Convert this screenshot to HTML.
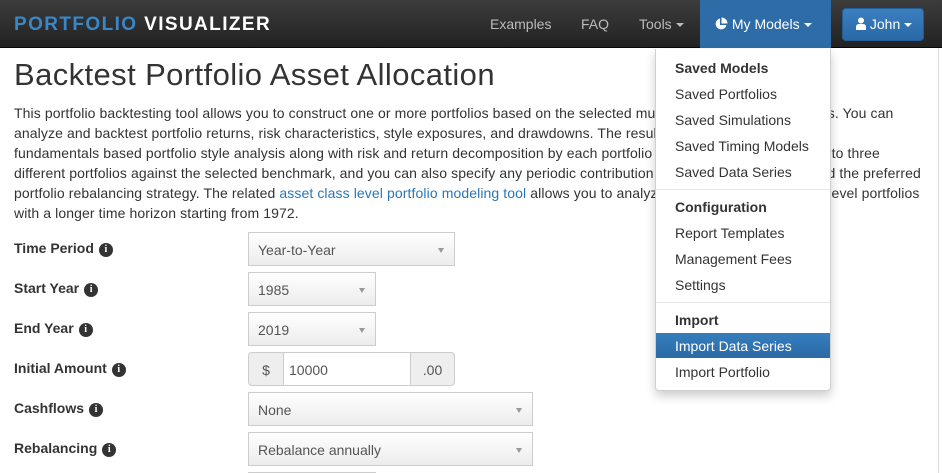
<!DOCTYPE html>
<html><head><meta charset="utf-8"><style>
*{box-sizing:border-box;margin:0;padding:0}
html,body{width:942px;height:473px;overflow:hidden}
body{background:#fff;font-family:"Liberation Sans",Arial,sans-serif;color:#333;position:relative}
.nav{position:absolute;left:0;top:0;width:942px;height:48px;background:linear-gradient(#3c3c3c,#222);border-bottom:1px solid #080808}
.logo{position:absolute;left:14px;top:14px;font-size:19px;font-weight:bold;letter-spacing:1.4px;color:#fff}
.logo span{color:#3a87c8}
.nl{position:absolute;top:16px;font-size:14px;color:#bbb}
.act{position:absolute;left:700px;top:0;width:131px;height:48px;background:#2d6ca7}
.john{position:absolute;left:842px;top:8px;width:82px;height:33px;background:linear-gradient(#3b7fc0,#2a68a6);border:1px solid #245e96;border-radius:4px}
.car{display:inline-block;width:0;height:0;border-left:4px solid transparent;border-right:4px solid transparent;border-top:4px solid currentColor;vertical-align:middle;margin-left:4px}
h1{position:absolute;left:14px;top:57px;font-size:31px;font-weight:normal;color:#333;letter-spacing:0.4px;white-space:nowrap}
p{position:absolute;left:14px;top:103px;width:930px;font-size:14px;line-height:20px;color:#333;letter-spacing:0.1px;white-space:nowrap}
a{color:#2a75b8;text-decoration:none}
.lbl{position:absolute;left:14px;font-size:14px;font-weight:bold;color:#333}
.i{display:inline-block;width:14px;height:14px;border-radius:50%;background:#333;color:#fff;font-size:10px;font-family:"Liberation Serif",serif;text-align:center;line-height:14px;margin-left:5px;vertical-align:1px;font-weight:bold}
.sel{position:absolute;left:248px;height:34px;border:1px solid #ccc;background:linear-gradient(#fff,#ececec);font-size:14px;color:#555;padding:9px 9px}
.sel:after{content:"";position:absolute;right:10px;top:15px;border-left:3.5px solid transparent;border-right:3.5px solid transparent;border-top:5px solid #999}
.add{position:absolute;top:352px;height:34px;background:#eee;border:1px solid #ccc;font-size:14px;color:#555;padding:9px 0;text-align:center}
.menu{position:absolute;left:655px;top:49px;width:176px;height:342px;background:#fff;border:1px solid rgba(0,0,0,.18);border-top:none;border-radius:0 0 4px 4px;box-shadow:0 5px 10px rgba(0,0,0,.2);font-size:14px}
.menu div{position:absolute;left:19px;color:#333}
.menu .h{font-weight:bold}
.menu .d{left:0;width:174px;height:1px;background:#e5e5e5}
.menu .hl{left:0;width:174px;height:25px;background:linear-gradient(#357ebd,#2b6aa5);color:#fff;padding:5px 19px}
</style></head><body>
<div class="nav">
<div class="logo"><span>PORTFOLIO</span> VISUALIZER</div>
<div class="nl" style="left:490px">Examples</div>
<div class="nl" style="left:581px">FAQ</div>
<div class="nl" style="left:639px">Tools<span class="car"></span></div>
<div class="act"></div>
<div class="nl" style="left:714px;color:#fff"><svg width="14" height="14" viewBox="0 0 14 14" style="vertical-align:-2px"><path d="M6 1.5A5.5 5.5 0 1 0 12.5 8H6Z" fill="#fff"/><path d="M7.5 0.5V6.5H13.5A6 6 0 0 0 7.5 0.5Z" fill="#fff"/></svg> My Models<span class="car"></span></div>
<div class="john"></div>
<div class="nl" style="left:856px;color:#fff"><svg width="10" height="13" viewBox="0 0 10 13" style="vertical-align:-1px"><circle cx="5" cy="3.5" r="3" fill="#fff"/><path d="M0 13V10Q0 7 3 7H7Q10 7 10 10V13Z" fill="#fff"/></svg> John<span class="car"></span></div>
</div>
<h1>Backtest Portfolio Asset Allocation</h1>
<p>This portfolio backtesting tool allows you to construct one or more portfolios based on the selected mutual funds, ETFs, and stocks. You can<br>analyze and backtest portfolio returns, risk characteristics, style exposures, and drawdowns. The results cover both returns and<br>fundamentals based portfolio style analysis along with risk and return decomposition by each portfolio asset. You can compare up to three<br>different portfolios against the selected benchmark, and you can also specify any periodic contribution or withdrawal cashflows and the preferred<br>portfolio rebalancing strategy. The related <a>asset class level portfolio modeling tool</a> allows you to analyze and backtest asset class level portfolios<br>with a longer time horizon starting from 1972.</p>
<div class="lbl" style="top:240px">Time Period<span class="i">i</span></div>
<div class="lbl" style="top:280px">Start Year<span class="i">i</span></div>
<div class="lbl" style="top:320px">End Year<span class="i">i</span></div>
<div class="lbl" style="top:360px">Initial Amount<span class="i">i</span></div>
<div class="lbl" style="top:400px">Cashflows<span class="i">i</span></div>
<div class="lbl" style="top:440px">Rebalancing<span class="i">i</span></div>
<div class="sel" style="top:232px;width:207px">Year-to-Year</div>
<div class="sel" style="top:272px;width:128px">1985</div>
<div class="sel" style="top:312px;width:128px">2019</div>
<div class="add" style="left:248px;width:36px;border-radius:4px 0 0 4px">$</div>
<div style="position:absolute;left:283px;top:352px;width:128px;height:34px;border:1px solid #ccc;font-size:14px;color:#555;padding:9px 5px">10000</div>
<div class="add" style="left:410px;width:45px;border-radius:0 4px 4px 0">.00</div>
<div class="sel" style="top:392px;width:285px">None</div>
<div class="sel" style="top:432px;width:285px">Rebalance annually</div>
<div style="position:absolute;left:248px;top:472px;width:128px;height:1px;background:#ccc"></div>
<div style="position:absolute;left:938px;top:48px;width:1px;height:425px;background:#ddd"></div>
<div class="menu">
<div class="h" style="top:11px">Saved Models</div>
<div style="top:37px">Saved Portfolios</div>
<div style="top:63px">Saved Simulations</div>
<div style="top:89px">Saved Timing Models</div>
<div style="top:115px">Saved Data Series</div>
<div class="d" style="top:140px"></div>
<div class="h" style="top:150px">Configuration</div>
<div style="top:176px">Report Templates</div>
<div style="top:202px">Management Fees</div>
<div style="top:228px">Settings</div>
<div class="d" style="top:253px"></div>
<div class="h" style="top:263px">Import</div>
<div class="hl" style="top:284px">Import Data Series</div>
<div style="top:315px">Import Portfolio</div>
</div>
</body></html>
